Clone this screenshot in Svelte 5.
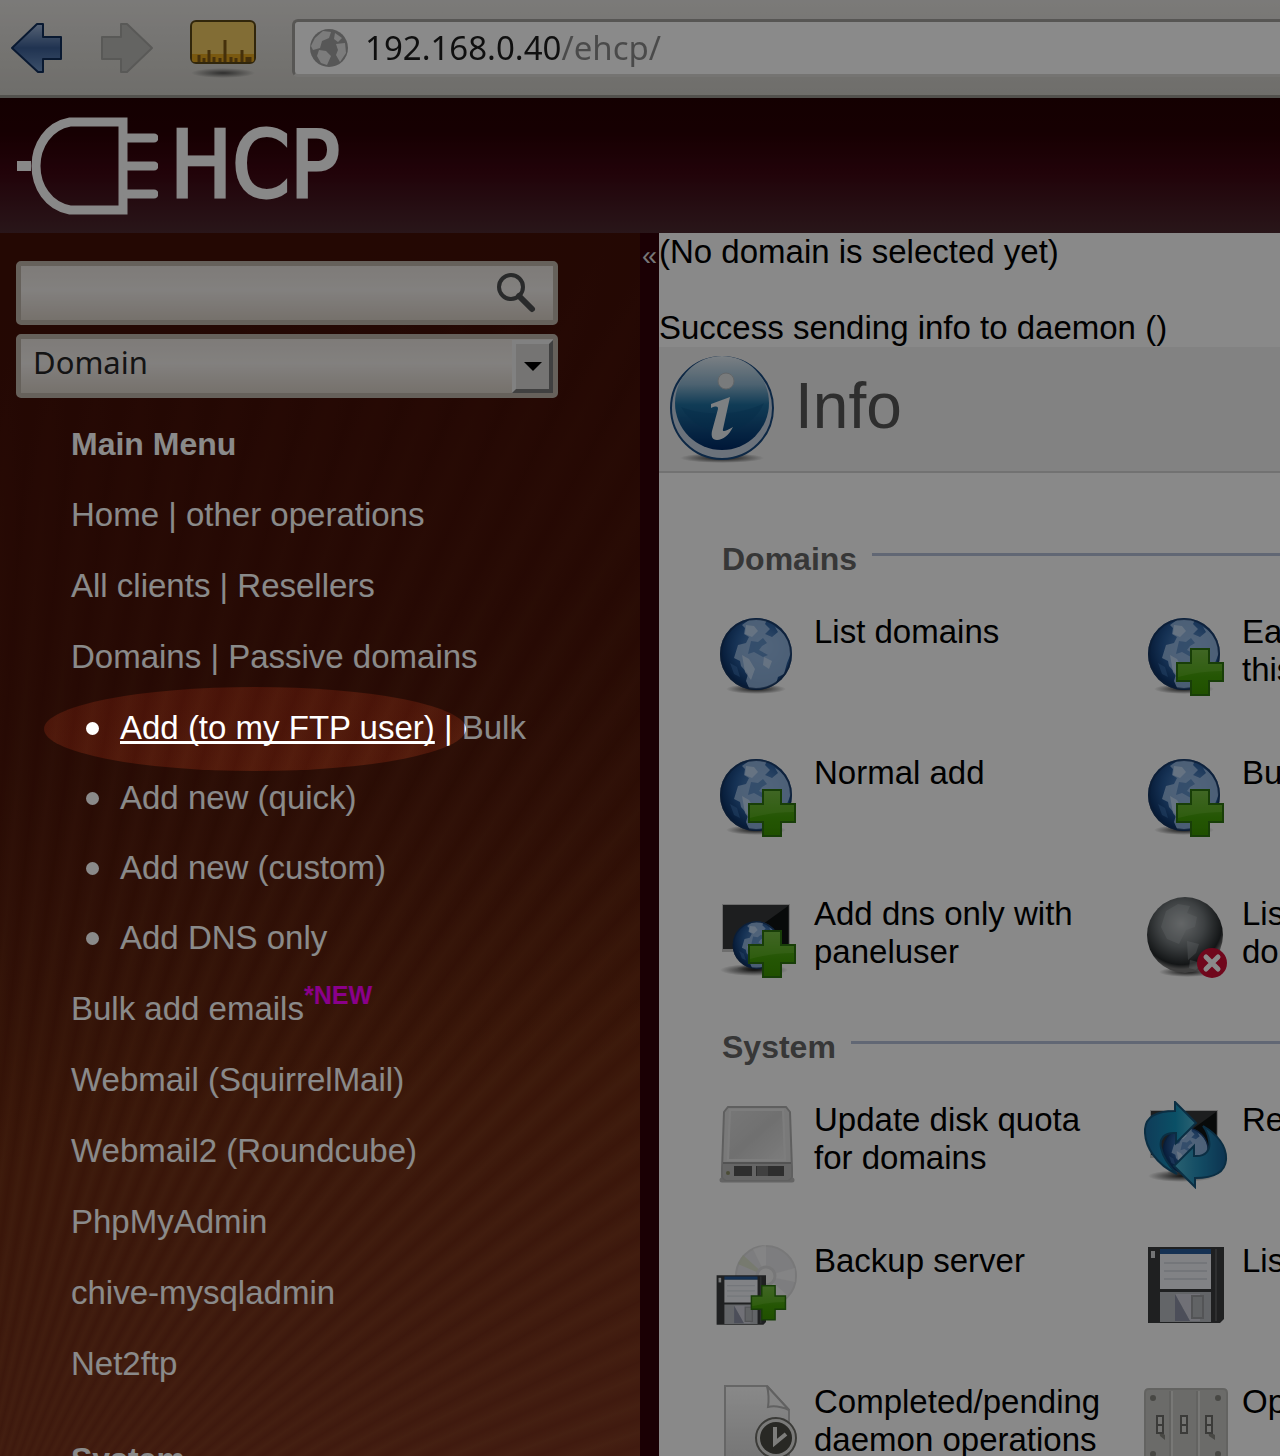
<script lang="ts">
    type Item = { icon: string, label: string };
    type Group = { title: string, items: Item[] };

    let address = $state('192.168.0.40/ehcp/');
    let search = $state('');
    let scope = $state('Domain');

    const topLinks = [
        ['Home', 'other operations'],
        ['All clients', 'Resellers'],
        ['Domains', 'Passive domains']
    ];

    const addLinks = ['Add new (quick)', 'Add new (custom)', 'Add DNS only'];

    const toolLinks = [
        'Webmail (SquirrelMail)',
        'Webmail2 (Roundcube)',
        'PhpMyAdmin',
        'chive-mysqladmin',
        'Net2ftp'
    ];

    const groups: Group[] = [
        {
            title: 'Domains',
            items: [
                { icon: 'globe', label: 'List domains' },
                { icon: 'globe-add', label: 'Easy add domain to this ftp' },
                { icon: 'globe-add', label: 'Normal add' },
                { icon: 'globe-add', label: 'Bulk add domain' },
                { icon: 'dns-add', label: 'Add dns only with paneluser' },
                { icon: 'globe-off', label: 'List passive domains' }
            ]
        },
        {
            title: 'System',
            items: [
                { icon: 'disk', label: 'Update disk quota for domains' },
                { icon: 'sync', label: 'Restart' },
                { icon: 'backup', label: 'Backup server' },
                { icon: 'floppy', label: 'List backups' },
                { icon: 'pending', label: 'Completed/pending daemon operations' },
                { icon: 'switches', label: 'Options' }
            ]
        }
    ];
</script>

{#snippet globe()}
    <ellipse cx="40" cy="76" rx="30" ry="5" fill="url(#shadow)" />
    <circle cx="40" cy="41" r="36" fill="url(#ocean)" />
    <g clip-path="url(#round)">
        <path d="M33 7c5-2 13-2 18 0l-2 4 5 5-5 5 7 3 6-5-3-5c9 5 15 14 16 26l-4 10-3 11-6 3-2 7-7 5-6 2-5 3-8-4-4-9 2-7-7-8-1-5-6-3 4-13 8-2 3-6-5-3 1-6-3-3z" fill="#9fbfe6" opacity=".85" />
        <path d="M35 28l7 1 5-4 4 5-5 3-3 4 9 5-5 2-9-5-6 2zM14 50l7 4 3 10-6-3z" fill="#3f74b4" opacity=".6" />
        <path d="M30 12l8 1 4 5-6 6-7-3zM26 42l7 4 6 10-4 11-6-8zM48 44l8 4-3 8-6-4z" fill="#cfe2fa" opacity=".7" />
    </g>
    <circle cx="40" cy="41" r="35" fill="none" stroke="#16345f" stroke-width="2" opacity=".75" />
{/snippet}

{#snippet plus()}
    <path d="M47 36h18v14h14v18H65v14H47V68H33V50h14z" fill="url(#green)" stroke="#2d7310" stroke-width="2" />
    <path d="M48 37h16v14h14v7c-14 0-30 2-44 6V51h14z" fill="#a5e06f" opacity=".2" />
{/snippet}

{#snippet monitor()}
    <ellipse cx="38" cy="75" rx="34" ry="6" fill="url(#shadow)" />
    <path d="M6 9h68v48H6z" fill="#c9c9c9" />
    <path d="M7 10h66v44H7z" fill="#36393a" />
    <path d="M72 11L32 40v14h40z" fill="#101314" />
{/snippet}

{#snippet floppy()}
    <path d="M4 5h76v72l-4 4H4z" fill="#3a3c3e" />
    <path d="M16 7h51v5H16z" fill="#275b9a" />
    <path d="M16 12h51v35H16z" fill="#eef1f5" />
    <path d="M20 21h43M20 29h43M20 37h43" stroke="#d6dbe2" stroke-width="2" />
    <path d="M16 50h51v30H16z" fill="#b7bbc0" />
    <path d="M31 52l15 27h10V52z" fill="#cfd0da" />
    <path d="M31 52v27h15z" fill="#8d91a5" />
    <path d="M48 54h11v22H48z" fill="#b4b7bb" stroke="#999ca0" stroke-width="2" />
    <path d="M7 9h4v7H7z" fill="#d4d6d8" />
    <path d="M72 7v72" stroke="#55585a" stroke-width="2" />
{/snippet}

{#snippet icon(name: string)}
    <svg class="icon" viewBox="0 0 84 88" aria-hidden="true">
        {#if name === 'globe'}
            {@render globe()}
        {:else if name === 'globe-add'}
            {@render globe()}
            {@render plus()}
        {:else if name === 'dns-add'}
            {@render monitor()}
            <g transform="translate(14 23) scale(.66)">{@render globe()}</g>
            {@render plus()}
        {:else if name === 'globe-off'}
            <ellipse cx="43" cy="77" rx="28" ry="5" fill="url(#shadow)" />
            <circle cx="41" cy="40" r="38" fill="url(#grey)" />
            <path d="M22 16l12-7 12 2-3 7 10 4-2 10-9 3-7 14-12-5-6-12z" fill="#b5babd" opacity=".35" />
            <path d="M43 46l12 3-3 9-8 7zM46 65l12 3-6 7-7-2z" fill="#b5babd" opacity=".35" />
            <circle cx="68" cy="68" r="15" fill="#cf0d35" />
            <path d="M62 62l12 12M74 62L62 74" stroke="#fff" stroke-width="5" stroke-linecap="round" />
        {:else if name === 'disk'}
            <path d="M6 79h70" stroke="#777" stroke-width="5" stroke-linecap="round" opacity=".5" />
            <path d="M12 6h58l4 5 2 57v8l-3 3H9l-3-3v-8l2-57z" fill="#e0e0e0" stroke="#b0b0b0" stroke-width="2" />
            <path d="M14 9h53l2 50H12z" fill="url(#metal)" stroke="#e8e8e8" stroke-width="2" />
            <path d="M7 62h68v14l-3 3H10l-3-3z" fill="#bcbcbc" />
            <path d="M7 62h68" stroke="#999" stroke-width="2" />
            <path d="M18 65h50v10H18z" fill="#555" />
            <path d="M36 65h4v10h-4z" fill="#bbb" />
            <path d="M41 65h11v10H41z" fill="#777" />
            <circle cx="12" cy="72" r="2" fill="#8d8f66" />
        {:else if name === 'sync'}
            {@render monitor()}
            <g transform="translate(16 23) scale(.64)">{@render globe()}</g>
            <path d="M31 1l21 21-20 20V32c-12-1-17 6-15 15 2 9 8 18 16 26C13 64 0 46 1 28c1-12 11-18 30-18z" fill="url(#cyan)" stroke="#15567d" stroke-width="2" />
            <path d="M51 86L30 65l20-20v10c12 1 17-6 15-16-1-6-3-10-6-14 14 8 24 20 23 34-1 13-12 18-31 18z" fill="url(#cyan-up)" stroke="#15567d" stroke-width="2" />
        {:else if name === 'backup'}
            <circle cx="50" cy="34" r="30" fill="#e8e8ea" stroke="#dededf" stroke-width="2" />
            <path d="M50 34L37 7l13-4zM50 34l29-8v14zM50 34l8 29 14-9z" fill="#fff" opacity=".5" />
            <path d="M50 34L22 22l5-9z" fill="#d8dfc6" opacity=".8" />
            <circle cx="50" cy="34" r="9" fill="#f3f3f3" stroke="#dcdcde" stroke-width="3" />
            <g transform="translate(-2 30) scale(.65)">{@render floppy()}</g>
            <g transform="translate(11 17) scale(.74)">{@render plus()}</g>
        {:else if name === 'floppy'}
            {@render floppy()}
        {:else if name === 'pending'}
            <path d="M9 3h42l22 24v61H9z" fill="url(#paper)" stroke="#bdbdbd" stroke-width="2" />
            <path d="M51 3c2 8 2 14 1 21 8-2 14 0 21 3z" fill="#f6f6f6" stroke="#b3b3b3" stroke-width="2" />
            <circle cx="60" cy="55" r="20" fill="#e2e2df" stroke="#6e6e68" stroke-width="2" />
            <circle cx="60" cy="55" r="16" fill="#4a4a43" />
            <path d="M59 44v16l11-9" fill="none" stroke="#e8e8e4" stroke-width="4" />
        {:else if name === 'switches'}
            <path d="M5 6h74q4 0 4 4v78H1V10q0-4 4-4z" fill="#c6c6c2" stroke="#b8b8b4" stroke-width="2" />
            <path d="M28 8v80M55 8v80" stroke="#dededa" stroke-width="2" />
            <path d="M26 8v80M53 8v80" stroke="#b8b8b4" stroke-width="2" />
            <g fill="#85857f">
                <circle cx="9" cy="15" r="3" /><circle cx="74" cy="15" r="3" />
                <circle cx="9" cy="71" r="3" /><circle cx="74" cy="71" r="3" />
                <path d="M15 48l6 4v5l-5-4zM64 48l7 4v5l-6-4z" />
            </g>
            <path d="M13 33h6v17h-6zM37 33h6v17h-6zM62 33h6v17h-6zM13 42h6M37 42h6M62 42h6" fill="#d6d6d2" stroke="#6e6e6a" stroke-width="2" />
        {/if}
    </svg>
{/snippet}

<svg class="defs" width="0" height="0" aria-hidden="true">
    <defs>
        <clipPath id="round"><circle cx="40" cy="41" r="35" /></clipPath>
        <radialGradient id="shadow">
            <stop offset="0" stop-color="#222" />
            <stop offset="1" stop-color="#222" stop-opacity="0" />
        </radialGradient>
        <radialGradient id="ocean" cx=".6" cy=".4" r=".65">
            <stop offset="0" stop-color="#6c9bd2" />
            <stop offset=".6" stop-color="#285c9c" />
            <stop offset="1" stop-color="#072a5c" />
        </radialGradient>
        <radialGradient id="grey" cx=".45" cy=".35" r=".6">
            <stop offset="0" stop-color="#b9bdbf" />
            <stop offset=".5" stop-color="#72787b" />
            <stop offset=".9" stop-color="#24282a" />
            <stop offset="1" stop-color="#777" />
        </radialGradient>
        <linearGradient id="green" x2="0" y2="1">
            <stop offset="0" stop-color="#6cb53a" />
            <stop offset=".6" stop-color="#449f08" />
            <stop offset="1" stop-color="#3b9300" />
        </linearGradient>
        <linearGradient id="cyan" x2="1" y2="0">
            <stop offset="0" stop-color="#1d6fa4" />
            <stop offset=".6" stop-color="#1494bd" />
            <stop offset="1" stop-color="#53b8d5" />
        </linearGradient>
        <linearGradient id="cyan-up" x2="1" y2="0">
            <stop offset="0" stop-color="#4cb4d2" />
            <stop offset=".5" stop-color="#238cb8" />
            <stop offset="1" stop-color="#175f94" />
        </linearGradient>
        <linearGradient id="metal" x2="1" y2="1">
            <stop offset="0" stop-color="#dcdcdc" />
            <stop offset=".5" stop-color="#cfcfcf" />
            <stop offset="1" stop-color="#e6e6e6" />
        </linearGradient>
        <linearGradient id="paper" x2="0" y2="1">
            <stop offset="0" stop-color="#fdfdfd" />
            <stop offset="1" stop-color="#d4d4d4" />
        </linearGradient>
        <linearGradient id="arrow" x2="0" y2="1">
            <stop offset="0" stop-color="#9fb6d8" />
            <stop offset=".5" stop-color="#3c5f96" />
            <stop offset="1" stop-color="#6f93c4" />
        </linearGradient>
        <linearGradient id="ball" x2="0" y2="1">
            <stop offset="0" stop-color="#e4edf4" />
            <stop offset=".3" stop-color="#8fb6d0" />
            <stop offset=".52" stop-color="#1f6f9f" />
            <stop offset="1" stop-color="#002a66" />
        </linearGradient>
    </defs>
</svg>

<div class="page">
    <div class="toolbar">
        <button class="tool" aria-label="Back">
            <svg width="54" height="52" viewBox="0 0 54 52">
                <path d="M2 26L27 2l6 0v13h18v22H33v13h-5z" fill="url(#arrow)" stroke="#122f5c" stroke-width="2" stroke-linejoin="round" />
            </svg>
        </button>
        <button class="tool" aria-label="Forward" disabled>
            <svg width="54" height="52" viewBox="0 0 54 52">
                <path d="M52 26L27 2h-6v13H2v22h19v13h6z" fill="#bab9b6" stroke="#a5a4a1" stroke-width="2" stroke-linejoin="round" />
            </svg>
        </button>
        <button class="tool" aria-label="Measure">
            <svg width="66" height="60" viewBox="0 0 66 60">
                <ellipse cx="33" cy="55" rx="32" ry="5" fill="url(#shadow)" opacity=".7" />
                <rect x="1" y="3" width="64" height="42" rx="5" fill="#f0ca63" stroke="#5c4716" stroke-width="2" />
                <path d="M2 36h62v6q0 2-3 2H5q-3 0-3-2z" fill="#e2a51e" />
                <path d="M9 44v-7M14 44v-4M19 44V32M24 44v-5M30 44v-4M35 44V22M41 44v-5M46 44v-4M52 44V32M57 44v-5M60 44v-5" stroke="#805a15" stroke-width="3" />
            </svg>
        </button>
        <label class="address">
            <svg width="40" height="40" viewBox="0 0 40 40" aria-hidden="true">
                <circle cx="20" cy="20" r="19" fill="#a2a2a2" />
                <path d="M6 10l8-7 8 1-2 6-7 3-2 7-7 2-2-4zM10 22l7 1 5 5-4 9-6-2-4-7zM26 5l7 5-4 4-4-3zM27 16l9-1 1 10-6 9-4-7 2-5z" fill="#e6e6e6" />
            </svg>
            <input bind:value={address} aria-label="Address" />
        </label>
    </div>

    <header class="banner">
        <svg width="142" height="100" viewBox="0 0 142 100" aria-hidden="true">
            <g fill="none" stroke="#fbfbfb">
                <path d="M1 50h14" stroke-width="10" />
                <path d="M107 6H54C32 10 20 30 20 50s12 40 34 44h53z" stroke-width="9" />
                <path d="M112 22h26M112 50h26M112 78h26" stroke-width="9" stroke-linecap="round" />
            </g>
        </svg>
        <span class="brand">HCP</span>
    </header>

    <div class="body">
        <aside class="sidebar">
            <div class="controls">
                <label class="field">
                    <input bind:value={search} aria-label="Search" />
                    <svg width="42" height="42" viewBox="0 0 42 42" aria-hidden="true">
                        <circle cx="16" cy="15" r="12" fill="none" stroke="#4d4f50" stroke-width="4" />
                        <path d="M24 24l13 13" stroke="#4d4f50" stroke-width="6" stroke-linecap="round" />
                    </svg>
                </label>
                <label class="field">
                    <select bind:value={scope} aria-label="Search in">
                        <option>Domain</option>
                    </select>
                    <span class="drop"></span>
                </label>
            </div>

            <nav>
                <h3>Main Menu</h3>
                {#each topLinks as [first, second]}
                    <p><a href="#top">{first}</a> | <a href="#top">{second}</a></p>
                {/each}
                <ul>
                    <li>
                        <span><a class="current" href="#top">Add (to my FTP user)</a> | <a href="#top">Bulk</a></span>
                        <div class="spotlight"></div>
                    </li>
                    {#each addLinks as link}
                        <li><a href="#top">{link}</a></li>
                    {/each}
                </ul>
                <p><a href="#top">Bulk add emails</a><sup>*NEW</sup></p>
                {#each toolLinks as link}
                    <p><a href="#top">{link}</a></p>
                {/each}
                <h3 class="next">System</h3>
            </nav>
        </aside>

        <button class="splitter" aria-label="Hide menu">«</button>

        <main>
            <div class="messages">
                <p>(No domain is selected yet)</p>
                <p>Success sending info to daemon ()</p>
            </div>
            <div class="title">
                <svg width="106" height="108" viewBox="0 0 106 108" aria-hidden="true">
                    <ellipse cx="53" cy="103" rx="42" ry="5" fill="url(#shadow)" />
                    <circle cx="53" cy="53" r="51" fill="#c6d3e4" stroke="#194a80" stroke-width="2" />
                    <circle cx="53" cy="48" r="47" fill="url(#ball)" />
                    <path d="M12 52a46 46 0 0 0 83-4c-22 12-58 14-83 4z" fill="#0a4f84" opacity=".35" />
                    <circle cx="57" cy="26" r="8" fill="#dfe3e6" stroke="#b6bcc0" stroke-width="1" />
                    <path d="M42 49l19-7-7 32c-1 3 2 3 10-2-4 8-10 13-16 13-5 0-6-4-5-9l6-22c0-3-2-3-7-1z" fill="#e8ecf0" />
                </svg>
                <h1>Info</h1>
            </div>

            <div class="groups">
                {#each groups as group}
                    <section>
                        <h2>{group.title}</h2>
                        <div class="items">
                            {#each group.items as item}
                                <a class="item" href="#top">
                                    {@render icon(item.icon)}
                                    <span>{item.label}</span>
                                </a>
                            {/each}
                        </div>
                    </section>
                {/each}
            </div>
        </main>
    </div>
</div>

<style>
    :global(body) {
        margin: 0;
    }

    .defs {
        position: absolute;
    }

    .page {
        display: flex;
        flex-direction: column;
        height: 100vh;
        overflow: hidden;
        font-family: "Liberation Sans", Arial, sans-serif;
        font-size: 33px;
        line-height: 38px;
        color: #000;
    }

    h1, h2, h3, p, ul {
        margin: 0;
        padding: 0;
    }

    a {
        color: inherit;
        text-decoration: none;
    }

    svg {
        display: block;
        flex-shrink: 0;
    }

    button, input, select {
        border: 0;
        padding: 0;
        background: none;
        font: inherit;
        color: inherit;
    }

    /* browser bar */
    .toolbar {
        display: flex;
        flex-shrink: 0;
        align-items: center;
        height: 95px;
        padding-left: 10px;
        border-bottom: 3px solid #98968f;
        background: linear-gradient(#e4e2df, #cdcbc5);
    }

    .tool {
        margin-right: 36px;
    }

    .address {
        display: flex;
        flex: 1;
        align-items: center;
        gap: 16px;
        height: 52px;
        padding-left: 14px;
        border: 3px solid #a19f9b;
        border-right: 0;
        border-bottom-color: #d9d7d3;
        border-radius: 6px 0 0 6px;
        background: #fff;
    }

    .address input {
        flex: 1;
        font-family: "Noto Sans", sans-serif;
        font-size: 33px;
        /* host dark, path grey */
        background: linear-gradient(90deg, #1c1c1c 196px, #8a8a8a 196px);
        background-clip: text;
        -webkit-text-fill-color: transparent;
    }

    .banner {
        display: flex;
        flex-shrink: 0;
        align-items: center;
        gap: 12px;
        height: 135px;
        padding-left: 16px;
        background: linear-gradient(#260003, #2a0004 25%, #3e0611 55%, #4c2930);
    }

    .brand {
        font-family: "DejaVu Sans Condensed", "DejaVu Sans", sans-serif;
        font-stretch: condensed;
        font-size: 92px;
        line-height: 104px;
        color: #fbfbfb;
        -webkit-text-stroke: 3px #fbfbfb;
    }

    .body {
        display: grid;
        grid-template-columns: 640px 19px 1fr;
        flex: 1;
        min-height: 0;
    }

    .sidebar {
        min-height: 0;
        color: #fff;
        background:
            linear-gradient(170deg, #430f07 5%, rgba(67, 15, 7, 0) 70%),
            repeating-conic-gradient(at -60px 1440px, rgba(255, 200, 110, 0) 0deg, rgba(255, 200, 110, 0.07) 1deg, rgba(255, 200, 110, 0) 2deg),
            linear-gradient(170deg, #430f07, #4c1609 35%, #66260f 65%, #78321e);
    }

    .controls {
        display: flex;
        flex-direction: column;
        gap: 9px;
        width: 542px;
        padding: 28px 0 0 16px;
    }

    .field {
        display: grid;
        grid-template-columns: 1fr auto;
        align-items: center;
        box-sizing: border-box;
        height: 64px;
        border: 5px solid #bdb3a8;
        border-radius: 5px;
        background: linear-gradient(#e9e4df, #f1edea 45%, #dad1c7);
    }

    .field input,
    .field select {
        grid-area: 1 / 1 / 2 / 3;
        width: 100%;
        height: 100%;
        padding: 0 0 8px 12px;
        box-sizing: border-box;
        appearance: none;
        font-family: "Noto Sans", sans-serif;
        font-size: 31px;
        line-height: 38px;
        color: #262626;
    }

    .field svg {
        grid-area: 1 / 2;
        margin-right: 16px;
    }

    .drop {
        display: grid;
        place-items: center;
        grid-area: 1 / 2;
        width: 33px;
        height: 45px;
        border: 4px solid #efefef;
        border-right-color: #777;
        border-bottom-color: #777;
        background: #d8d6d4;
        pointer-events: none;
    }

    .drop::before {
        content: "";
        border: 9px solid transparent;
        border-top-color: #000;
        border-bottom: 0;
    }

    nav {
        display: flex;
        flex-direction: column;
        gap: 33px;
        padding: 27px 0 0 71px;
    }

    h3 {
        font-size: 32px;
        font-weight: 700;
    }

    .next {
        padding-top: 24px;
    }

    nav ul {
        display: flex;
        flex-direction: column;
        gap: 32px;
        padding-left: 15px;
        list-style: none;
    }

    nav li {
        position: relative;
        display: flex;
        align-items: center;
        gap: 21px;
    }

    nav li::before {
        content: "";
        width: 13px;
        height: 13px;
        border-radius: 50%;
        background: #fff;
    }

    .current {
        text-decoration: underline;
        text-decoration-thickness: 3px;
        text-decoration-skip-ink: none;
        text-underline-offset: 2px;
    }

    /* the shadow darkens everything outside the oval */
    .spotlight {
        position: absolute;
        z-index: 10;
        top: -22px;
        left: -42px;
        width: 422px;
        height: 84px;
        border-radius: 50%;
        box-shadow: 0 0 0 200vmax rgba(0, 0, 0, 0.46);
        pointer-events: none;
    }

    sup {
        font-size: 25px;
        font-weight: 700;
        line-height: 0;
        vertical-align: 16px;
        color: #f0f;
    }

    .splitter {
        display: flex;
        justify-content: center;
        padding-top: 4px;
        background: #320009;
        color: #ddd;
        font-size: 27px;
    }

    main {
        min-width: 960px;
        background: #fdfdfd;
    }

    .messages {
        display: flex;
        flex-direction: column;
        gap: 38px;
    }

    .title {
        display: flex;
        align-items: center;
        gap: 20px;
        height: 124px;
        padding-left: 10px;
        border-bottom: 2px solid #d2d2d2;
        background: #f0f0f0;
    }

    h1 {
        padding-bottom: 6px;
        font-size: 64px;
        font-weight: 400;
        line-height: 72px;
        color: #555;
    }

    .groups {
        display: flex;
        flex-direction: column;
        gap: 57px;
        padding: 67px 0 0 57px;
    }

    h2 {
        display: flex;
        align-items: center;
        gap: 15px;
        padding-left: 6px;
        font-size: 32px;
        font-weight: 700;
        color: #666;
    }

    h2::after {
        content: "";
        flex: 1;
        height: 3px;
        margin-bottom: 10px;
        background: #b4bed6;
    }

    .items {
        display: grid;
        grid-template-columns: repeat(2, 428px);
        grid-auto-rows: 76px;
        row-gap: 65px;
        padding-top: 35px;
    }

    .item {
        display: flex;
        align-items: flex-start;
        gap: 14px;
    }

    .item span {
        width: 296px;
    }

    .icon {
        width: 84px;
        height: 88px;
    }
</style>
